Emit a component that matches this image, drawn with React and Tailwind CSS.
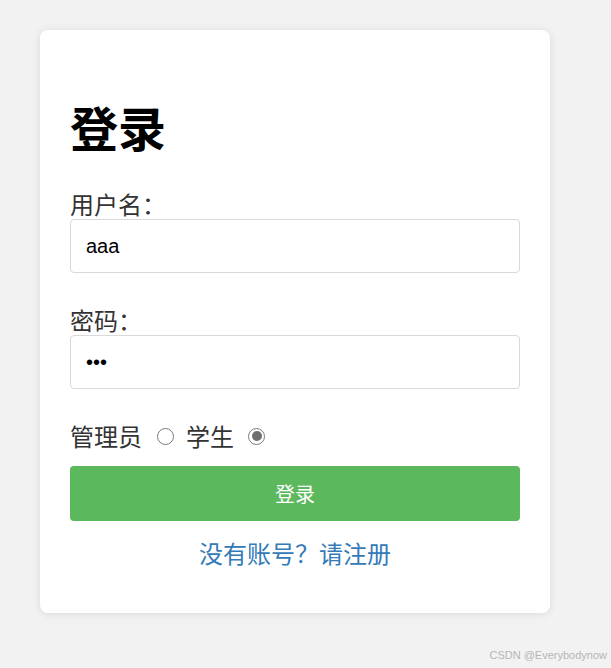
import { useState } from "react";

const cjk = "font-['Microsoft_YaHei','Noto_Sans_CJK_SC',sans-serif]";

const Radio = ({ checked, onClick }) => (
    <span onClick={onClick} className="w-[17px] h-[17px] rounded-full border-[1.5px] border-[#7a7a7a] bg-white flex items-center justify-center cursor-pointer">
        {checked && <span className="w-[10px] h-[10px] rounded-full bg-[#6f6f6f]"></span>}
    </span>
);

const App = () => {
    const [role, setRole] = useState("student");

    return (
        <div className={`relative min-h-[668px] bg-[#f2f2f2] pt-[30px] pl-[40px] ${cjk}`}>
            <div className="w-[510px] bg-white rounded-[8px] shadow-[0_1px_8px_rgba(0,0,0,0.1)] px-[30px] pt-[70px] pb-[45px]">
                <h1 className="text-[48px] leading-[53px] font-bold text-black">登录</h1>

                <div className="mt-[36px]">
                    <p className="text-[24px] leading-[30px] text-[#333]">用户名：</p>
                    <input
                        type="text"
                        defaultValue="aaa"
                        className="w-full h-[54px] border border-[#d9d9d9] rounded-[4px] px-[15px] text-[20px] text-black font-['Liberation_Sans',Arial,sans-serif] outline-none"
                    />
                </div>

                <div className="mt-[32px]">
                    <p className="text-[24px] leading-[30px] text-[#333]">密码：</p>
                    <input
                        type="password"
                        defaultValue="aaa"
                        className="w-full h-[54px] border border-[#d9d9d9] rounded-[4px] px-[15px] text-[20px] text-black font-['Liberation_Sans',Arial,sans-serif] outline-none"
                    />
                </div>

                <div className="mt-[32px] flex items-center h-[30px] text-[24px] leading-[30px] text-[#333]">
                    <span>管理员</span>
                    <span className="ml-[15px]"><Radio checked={role === "admin"} onClick={() => setRole("admin")} /></span>
                    <span className="ml-[12px]">学生</span>
                    <span className="ml-[14px]"><Radio checked={role === "student"} onClick={() => setRole("student")} /></span>
                </div>

                <button className="mt-[15px] w-full h-[55px] bg-[#5cb85c] rounded-[4px] text-white text-[20px]">登录</button>

                <p className="mt-[17px] text-center text-[24px] leading-[30px] text-[#337ab7]">没有账号？请注册</p>
            </div>

            <span className="absolute right-[4px] bottom-[5px] text-[11px] text-[#b5b5b5] font-['Liberation_Sans',Arial,sans-serif]">CSDN @Everybodynow</span>
        </div>
    );
};

export default App;
